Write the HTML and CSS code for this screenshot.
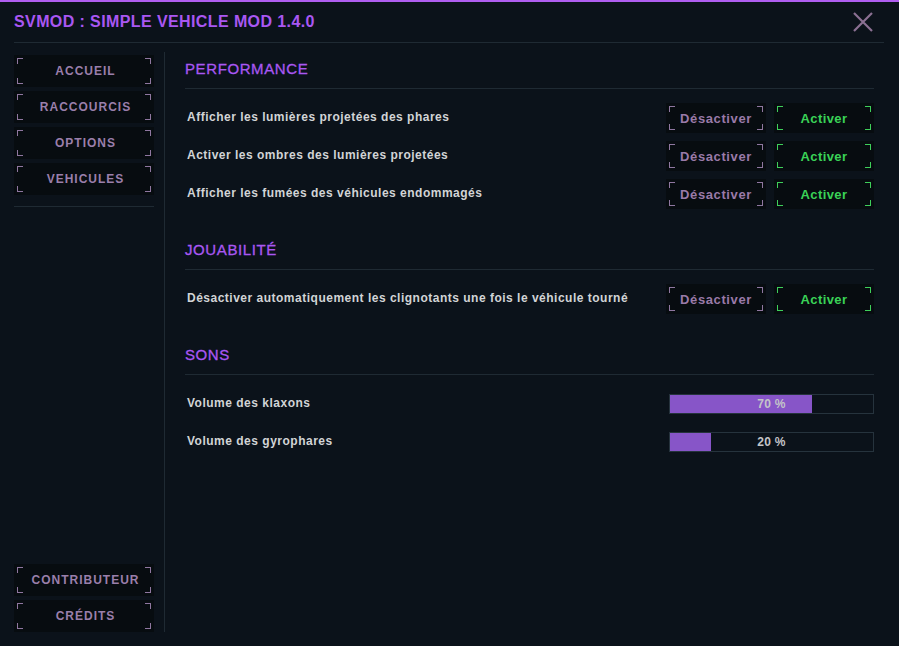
FILE: index.html
```html
<!DOCTYPE html>
<html lang="fr">
<head>
    <meta charset="UTF-8">
    <meta name="viewport" content="width=device-width, initial-scale=1.0">
    <title>SVMOD : SIMPLE VEHICLE MOD 1.4.0</title>
    <link rel="stylesheet" href="styles.css">
</head>
<body>
    <div class="window">
        <div class="header">
            <h1>SVMOD : SIMPLE VEHICLE MOD 1.4.0</h1>
            <button type="button" class="close" aria-label="Fermer">
                <svg width="20" height="20" viewBox="0 0 20 20"><path d="M1 1 L19 19 M19 1 L1 19" stroke="#8b7093" stroke-width="2.2" fill="none"/></svg>
            </button>
        </div>
        <div class="main">
            <div class="sidebar">
                <div class="menu">
                    <button type="button" class="bracket menu-btn">ACCUEIL</button>
                    <button type="button" class="bracket menu-btn">RACCOURCIS</button>
                    <button type="button" class="bracket menu-btn">OPTIONS</button>
                    <button type="button" class="bracket menu-btn">VEHICULES</button>
                </div>
                <div class="menu menu-bottom">
                    <button type="button" class="bracket menu-btn">CONTRIBUTEUR</button>
                    <button type="button" class="bracket menu-btn">CRÉDITS</button>
                </div>
            </div>
            <div class="content">
                <div class="section">
                    <h2>PERFORMANCE</h2>
                    <div class="row">
                        <span class="label">Afficher les lumières projetées des phares</span>
                        <div class="toggle">
                            <button type="button" class="bracket off">Désactiver</button>
                            <button type="button" class="bracket on">Activer</button>
                        </div>
                    </div>
                    <div class="row">
                        <span class="label">Activer les ombres des lumières projetées</span>
                        <div class="toggle">
                            <button type="button" class="bracket off">Désactiver</button>
                            <button type="button" class="bracket on">Activer</button>
                        </div>
                    </div>
                    <div class="row">
                        <span class="label">Afficher les fumées des véhicules endommagés</span>
                        <div class="toggle">
                            <button type="button" class="bracket off">Désactiver</button>
                            <button type="button" class="bracket on">Activer</button>
                        </div>
                    </div>
                </div>
                <div class="section">
                    <h2>JOUABILITÉ</h2>
                    <div class="row">
                        <span class="label">Désactiver automatiquement les clignotants une fois le véhicule tourné</span>
                        <div class="toggle">
                            <button type="button" class="bracket off">Désactiver</button>
                            <button type="button" class="bracket on">Activer</button>
                        </div>
                    </div>
                </div>
                <div class="section">
                    <h2>SONS</h2>
                    <div class="row">
                        <span class="label">Volume des klaxons</span>
                        <div class="slider">
                            <div class="fill" style="width: 70%"></div>
                            <span class="value">70 %</span>
                        </div>
                    </div>
                    <div class="row">
                        <span class="label">Volume des gyrophares</span>
                        <div class="slider">
                            <div class="fill" style="width: 20%"></div>
                            <span class="value">20 %</span>
                        </div>
                    </div>
                </div>
            </div>
        </div>
    </div>
</body>
</html>
```

FILE: styles.css
```css
/* SVMOD menu */
body {
    margin: 0;
    padding: 0;
    background-color: #0b121a;
    font-family: "Liberation Sans", Arial, sans-serif;
    color: #d2d4d6;
}
.window {
    height: 644px;
    border-top: 2px solid #b05ef0;
    display: flex;
    flex-direction: column;
}
.header {
    height: 40px;
    margin: 0 15px 0 14px;
    border-bottom: 1px solid #1f2a33;
    display: flex;
    align-items: center;
    justify-content: space-between;
}
h1 {
    margin: 0;
    font-size: 16px;
    font-weight: bold;
    color: #a957f2;
    letter-spacing: 0.4px;
}
.close {
    background: none;
    border: none;
    padding: 0;
    margin-right: 11px;
    width: 20px;
    height: 20px;
    cursor: pointer;
}
.main {
    flex: 1;
    display: flex;
    padding-bottom: 14px;
}
.sidebar {
    width: 140px;
    margin: 9px 0 0 14px;
    padding: 3px 10px 0 0;
    display: flex;
    flex-direction: column;
    justify-content: space-between;
    border-right: 1px solid #1f2a33;
}
.menu {
    display: flex;
    flex-direction: column;
    gap: 4px;
    padding-bottom: 11px;
    border-bottom: 1px solid #1f2a33;
}
.menu-bottom {
    border-bottom: none;
    padding-bottom: 0;
}
/* boutons avec coins */
.bracket {
    position: relative;
    height: 32px;
    background-color: #070c10;
    border: none;
    font-family: "Liberation Sans", Arial, sans-serif;
    font-weight: bold;
    cursor: pointer;
    --c: #8f77a0;
}
.bracket::before {
    content: "";
    position: absolute;
    inset: 3px;
    background:
        linear-gradient(var(--c), var(--c)) top left / 6px 1px no-repeat,
        linear-gradient(var(--c), var(--c)) top left / 1px 6px no-repeat,
        linear-gradient(var(--c), var(--c)) top right / 6px 1px no-repeat,
        linear-gradient(var(--c), var(--c)) top right / 1px 6px no-repeat,
        linear-gradient(var(--c), var(--c)) bottom left / 6px 1px no-repeat,
        linear-gradient(var(--c), var(--c)) bottom left / 1px 6px no-repeat,
        linear-gradient(var(--c), var(--c)) bottom right / 6px 1px no-repeat,
        linear-gradient(var(--c), var(--c)) bottom right / 1px 6px no-repeat;
}
.menu-btn {
    width: 140px;
    font-size: 12px;
    letter-spacing: 1px;
    color: #9a7fab;
    padding: 0 5px 0 8px;
}
.content {
    flex: 1;
    padding: 16px 25px 0 20px;
}
.section + .section {
    margin-top: 31px;
}
h2 {
    margin: 0 0 14px 0;
    font-size: 15px;
    line-height: 20px;
    font-weight: normal;
    color: #a957f2;
    padding-bottom: 9px;
    border-bottom: 1px solid #1f2a33;
    letter-spacing: 0.6px;
    -webkit-text-stroke: 0.3px #a957f2;
}
.row {
    height: 30px;
    display: flex;
    align-items: center;
    justify-content: space-between;
    margin-bottom: 8px;
}
.label {
    padding-left: 2px;
    font-size: 12px;
    font-weight: bold;
    letter-spacing: 0.5px;
    padding-bottom: 3px;
}
.toggle {
    display: flex;
    gap: 8px;
}
.toggle .bracket {
    width: 100px;
    height: 30px;
    font-size: 13px;
}
.off {
    color: #9a7aa8;
    letter-spacing: 0.6px;
}
.on {
    color: #3ad257;
    letter-spacing: 0.4px;
    --c: #3ecf5a;
}
.slider {
    position: relative;
    width: 203px;
    height: 18px;
    border: 1px solid #26333d;
    display: flex;
    align-items: center;
    justify-content: center;
}
.fill {
    position: absolute;
    left: 0;
    top: 0;
    bottom: 0;
    background-color: #8755c8;
}
.value {
    position: relative;
    font-size: 12px;
    font-weight: bold;
    color: #c4c4c8;
    letter-spacing: 0.3px;
}
```
